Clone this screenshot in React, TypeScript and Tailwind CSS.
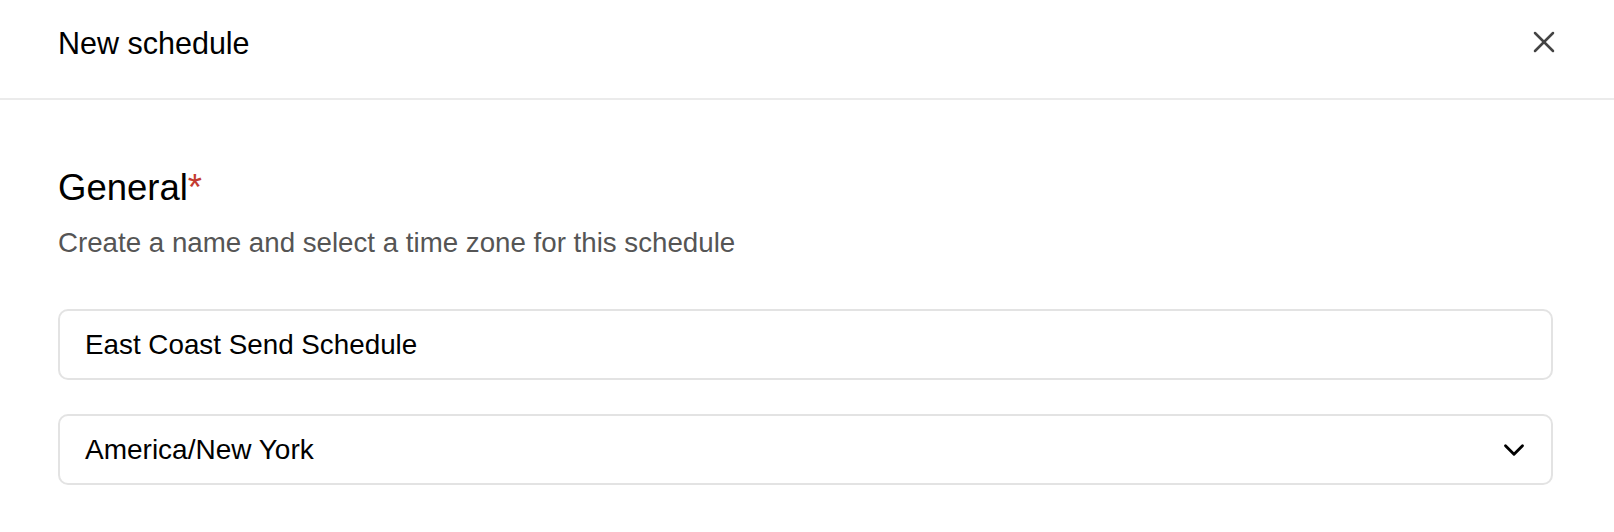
import { X, ChevronDown } from 'lucide-react';

export default function App() {
  return (
    <div className="w-[1614px] h-[532px] bg-white text-black" style={{ fontFamily: '"Liberation Sans", Arial, sans-serif' }}>
      {/* Header */}
      <div className="h-[100px] flex items-center justify-between pl-[58px] pr-[52px] border-b-2 border-[#ebebeb]">
        <h1 className="text-[30.5px] leading-none pb-[12px]">New schedule</h1>
        <button className="text-[#444] pb-[14px]">
          <X size={36} strokeWidth={1.7} />
        </button>
      </div>

      {/* Body */}
      <div className="pl-[58px] pr-[61px] pt-[70px]">
        <h2 className="text-[36.5px] leading-none">
          General<span className="text-[#c33b30]">*</span>
        </h2>
        <p className="mt-[22px] text-[27.7px] leading-none text-[#555]">
          Create a name and select a time zone for this schedule
        </p>

        <div className="mt-[53px] flex flex-col gap-[34px]">
          <div className="h-[71px] rounded-[10px] border-2 border-[#e3e3e3] flex items-center px-[25px]">
            <span className="text-[27.8px] leading-none">East Coast Send Schedule</span>
          </div>
          <div className="h-[71px] rounded-[10px] border-2 border-[#e3e3e3] flex items-center justify-between pl-[25px] pr-[20px]">
            <span className="text-[28px] leading-none">America/New York</span>
            <ChevronDown size={34} strokeWidth={2} />
          </div>
        </div>
      </div>
    </div>
  );
}
